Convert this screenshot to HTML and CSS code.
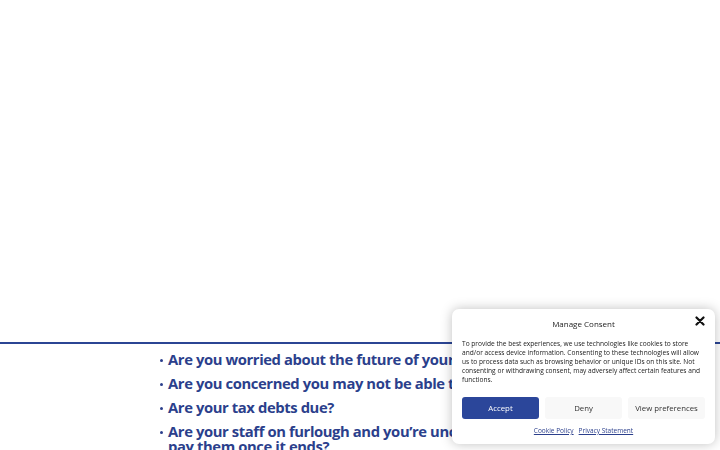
FILE: index.html
```html
<!DOCTYPE html>
<html lang="en">
<head>
    <meta charset="UTF-8">
    <meta name="viewport" content="width=device-width, initial-scale=1.0">
    <title>Business Rescue</title>
    <link rel="stylesheet" href="styles.css">
</head>
<body>
    <div class="hero"></div>
    <div class="divider"></div>
    <ul class="questions">
        <li>Are you worried about the future of your business?</li>
        <li>Are you concerned you may not be able to pay creditors?</li>
        <li>Are your tax debts due?</li>
        <li>Are your staff on furlough and you’re uncertain whether you can pay them once it ends?</li>
    </ul>

    <!-- Cookie banner -->
    <div class="consent">
        <div class="consent-header">
            <span class="consent-title">Manage Consent</span>
            <span class="consent-close">
                <svg width="10" height="10" viewBox="0 0 10 10"><path d="M1.5 1.5 L8.5 8.5 M8.5 1.5 L1.5 8.5" stroke="#111" stroke-width="2.2" stroke-linecap="round"/></svg>
            </span>
        </div>
        <p class="consent-text">To provide the best experiences, we use technologies like cookies to store and/or access device information. Consenting to these technologies will allow us to process data such as browsing behavior or unique IDs on this site. Not consenting or withdrawing consent, may adversely affect certain features and functions.</p>
        <div class="consent-buttons">
            <button class="btn btn-accept">Accept</button>
            <button class="btn">Deny</button>
            <button class="btn">View preferences</button>
        </div>
        <div class="consent-links">
            <a href="#">Cookie Policy</a>
            <a href="#">Privacy Statement</a>
        </div>
    </div>
</body>
</html>
```

FILE: styles.css
```css
body {
    font-family: "Open Sans", Arial, sans-serif;
    margin: 0;
    padding: 0;
    background-color: #ffffff;
    overflow: hidden;
    height: 450px;
}
.hero {
    height: 342px;
}
.divider {
    height: 2px;
    background-color: #2b4594;
}
.questions {
    margin: 0;
    padding: 8px 0 0 168px;
    list-style: none;
    color: #2b3f8c;
    font-size: 14.8px;
    font-weight: bold;
    letter-spacing: -0.4px;
    width: 455px;
}
.questions li {
    position: relative;
    line-height: 15px;
    margin-bottom: 9px;
    white-space: nowrap;
}
.questions li:last-child {
    white-space: normal;
}
.questions li:before {
    content: "";
    position: absolute;
    left: -8px;
    top: 7px;
    width: 3px;
    height: 3px;
    border-radius: 50%;
    background-color: #2b3f8c;
}

/* Cookie banner */
.consent {
    position: fixed;
    left: 452px;
    top: 309px;
    width: 243px;
    padding: 5px 10px 9px 10px;
    background: #ffffff;
    border-radius: 7px;
    box-shadow: 0 0 12px rgba(0, 0, 0, 0.25);
    color: #222222;
}
.consent-header {
    position: relative;
    text-align: center;
    height: 14px;
    line-height: 14px;
}
.consent-title {
    font-size: 8px;
}
.consent-close {
    position: absolute;
    right: 0;
    top: 2px;
    line-height: 0;
}
.consent-text {
    margin: 11px 0 0 0;
    font-size: 6.6px;
    line-height: 9px;
}
.consent-buttons {
    display: flex;
    gap: 6px;
    margin-top: 13px;
}
.btn {
    flex: 1;
    height: 22px;
    border: none;
    border-radius: 3px;
    background-color: #f8f8f8;
    color: #333333;
    font-family: inherit;
    font-size: 7.8px;
    padding: 0;
}
.btn-accept {
    background-color: #2b469a;
    color: #ffffff;
}
.consent-links {
    display: flex;
    justify-content: center;
    gap: 5px;
    margin-top: 7px;
}
.consent-links a {
    font-size: 6.5px;
    color: #2b3f8c;
}
```
